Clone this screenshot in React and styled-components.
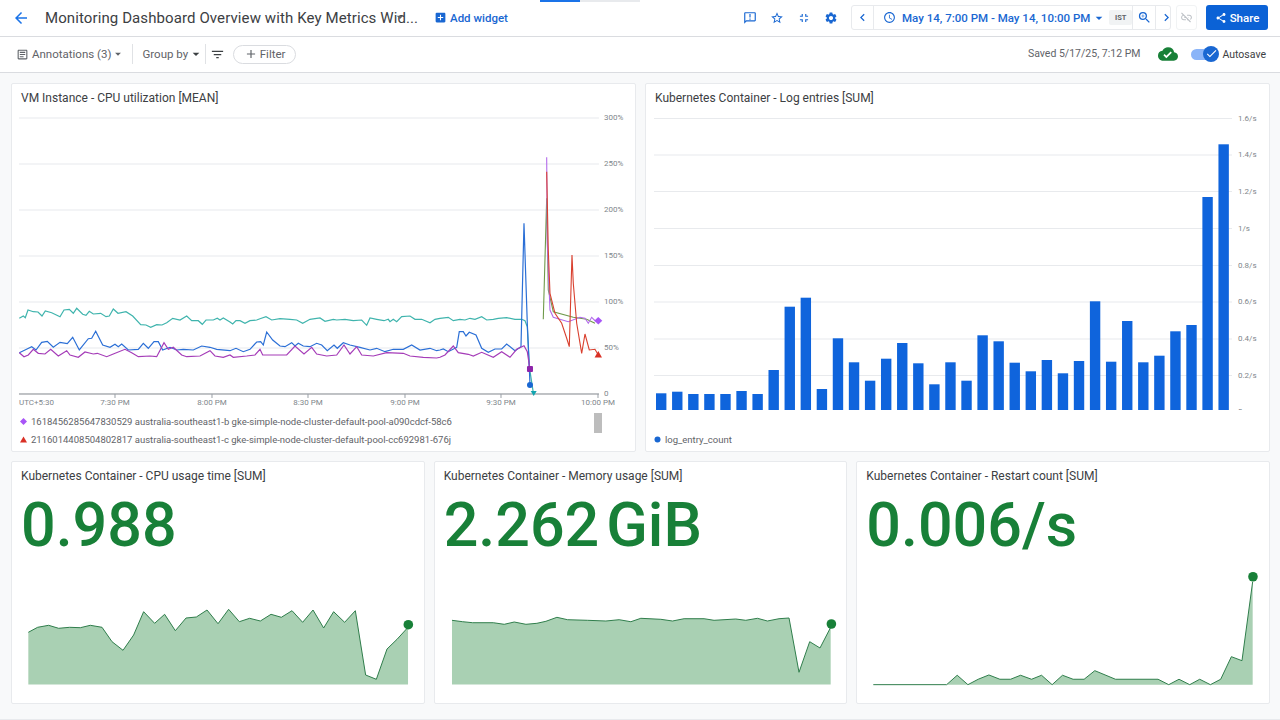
import React from 'react';
import styled, { createGlobalStyle } from 'styled-components';
import {
  MdArrowBack, MdArrowDropDown, MdAddBox, MdOutlineAnnouncement, MdStarBorder, MdFullscreenExit,
  MdSettings, MdChevronLeft, MdChevronRight, MdAccessTime, MdZoomIn, MdOutlineLinkOff, MdShare,
  MdOutlineArticle, MdFilterList, MdAdd, MdCloudDone, MdCheck,
} from 'react-icons/md';

const GlobalStyle = createGlobalStyle`
  html, body { margin: 0; padding: 0; background: #f8f9fa; }
  body { font-family: Roboto, "Liberation Sans", sans-serif; color: #3c4043; }
`;

const Page = styled.div`
  width: 1280px;
  height: 720px;
  display: flex;
  flex-direction: column;
  overflow: hidden;
  position: relative;
  background: #f8f9fa;
  border-bottom: 1px solid #e8eaed;
  box-sizing: border-box;
`;

const LoadBar = styled.div`
  position: absolute;
  top: 0;
  left: 540px;
  width: 100px;
  height: 2px;
  background: linear-gradient(90deg, #1a73e8 40%, #e8eaed 40%);
`;

const Header = styled.header`
  height: 37px;
  flex: none;
  box-sizing: border-box;
  display: flex;
  align-items: center;
  padding: 0 12px 1px 12px;
  background: #fff;
  border-bottom: 1px solid #dadce0;
`;

const BackButton = styled.span`
  display: flex;
  color: #1a73e8;
  font-size: 18px;
  margin-right: 15px;
`;

const DashboardTitle = styled.h1`
  margin: 0;
  font-size: 15px;
  line-height: 20px;
  font-weight: 400;
  letter-spacing: 0.1px;
  color: #3c4043;
  width: 347px;
  white-space: nowrap;
`;

const Caret = styled.span`
  display: flex;
  font-size: ${p => p.$size || 16}px;
  color: ${p => p.$color || '#5f6368'};
  margin: ${p => p.$margin || '0'};
`;

const AddWidget = styled.span`
  display: flex;
  align-items: center;
  gap: 3px;
  margin-left: 26px;
  font-size: 11.5px;
  font-weight: 500;
  color: #1967d2;
`;

const Spacer = styled.div`
  flex: 1;
`;

const HeaderIcons = styled.div`
  display: flex;
  align-items: center;
  gap: 13px;
  color: #1967d2;
  font-size: 14px;
  margin-right: 13px;
`;

const IconSlot = styled.span`
  display: flex;
  font-size: 14px;
`;

const TimeBox = styled.div`
  display: flex;
  align-items: center;
  width: 320px;
  height: 25px;
  box-sizing: border-box;
  border: 1px solid #e8eaed;
  border-radius: 3px;
  color: #1967d2;
`;

const TimeSlot = styled.span`
  width: ${p => p.$width}px;
  height: 100%;
  flex: none;
  display: flex;
  align-items: center;
  justify-content: center;
  font-size: 15px;
  border-right: ${p => (p.$divider ? '1px solid #e8eaed' : 'none')};
`;

const TimeRange = styled.span`
  flex: 1;
  height: 100%;
  display: flex;
  align-items: center;
  padding-left: 9px;
  font-size: 11.5px;
  font-weight: 500;
  white-space: nowrap;
  border-right: 1px solid #e8eaed;
`;

const ZoneChip = styled.span`
  margin-left: 2px;
  width: 23px;
  height: 15px;
  display: flex;
  align-items: center;
  justify-content: center;
  border-radius: 2px;
  background: #f1f3f4;
  color: #5f6368;
  font-size: 7.5px;
  font-weight: 700;
`;

const DisabledButton = styled.span`
  width: 21px;
  height: 25px;
  margin: 0 9px 0 5px;
  box-sizing: border-box;
  display: flex;
  align-items: center;
  justify-content: center;
  border: 1px solid #f1f3f4;
  border-radius: 3px;
  color: #bdc1c6;
  font-size: 13px;
`;

const ShareButton = styled.span`
  width: 62px;
  height: 25px;
  display: flex;
  align-items: center;
  justify-content: center;
  gap: 3px;
  background: #0b62d6;
  border-radius: 3px;
  color: #fff;
  font-size: 11.5px;
  font-weight: 500;
`;

const Toolbar = styled.div`
  height: 36px;
  flex: none;
  box-sizing: border-box;
  display: flex;
  align-items: center;
  padding: 0 14px 1px 16px;
  background: #fff;
  border-bottom: 1px solid #dadce0;
  font-size: 11.5px;
  color: #5f6368;
`;

const ToolbarIcon = styled.span`
  display: flex;
  font-size: 13px;
  margin-right: 3px;
`;

const Divider = styled.span`
  width: 1px;
  height: ${p => p.$height || 20}px;
  background: #e0e2e5;
  margin: ${p => p.$margin};
`;

const FilterPill = styled.span`
  width: 63px;
  height: 19px;
  box-sizing: border-box;
  display: flex;
  align-items: center;
  justify-content: center;
  gap: 2px;
  margin-left: 8px;
  border: 1px solid #dadce0;
  border-radius: 10px;
`;

const SavedText = styled.span`
  font-size: 10.5px;
  color: #5f6368;
  margin-bottom: 2px;
`;

const Cloud = styled.span`
  display: flex;
  font-size: 20px;
  color: #188038;
  margin: 0 13px 0 18px;
`;

const ToggleTrack = styled.span`
  position: relative;
  display: block;
  width: 26px;
  height: 11px;
  border-radius: 6px;
  background: #8ab4f8;
  margin-right: 5px;
`;

const ToggleKnob = styled.span`
  position: absolute;
  right: -2px;
  top: -3px;
  width: 16px;
  height: 16px;
  border-radius: 50%;
  background: #1967d2;
  color: #fff;
  font-size: 13px;
  display: flex;
  align-items: center;
  justify-content: center;
`;

const AutosaveLabel = styled.span`
  color: #3c4043;
  font-size: 10.5px;
`;

const Board = styled.main`
  flex: 1;
  display: grid;
  grid-template-columns: repeat(6, 1fr);
  grid-template-rows: 369px 243px;
  gap: 9px;
  padding: 10px 10px 0 11px;
  box-sizing: border-box;
  align-content: start;
`;

const Card = styled.section`
  grid-column: span ${p => p.$span};
  box-sizing: border-box;
  display: flex;
  flex-direction: column;
  min-width: 0;
  background: #fff;
  border: 1px solid #e8eaed;
  border-radius: 2px;
`;

const CardTitle = styled.h2`
  margin: 0;
  height: 26px;
  flex: none;
  padding: 7px 0 0 9px;
  box-sizing: border-box;
  font-size: 12px;
  line-height: 15px;
  font-weight: 400;
  color: #3c4043;
  white-space: nowrap;
`;

const ChartSvg = styled.svg`
  display: block;
  flex: none;
  width: 100%;
  height: 300px;
`;

const AxisText = styled.text`
  font-family: Roboto, "Liberation Sans", sans-serif;
  font-size: 8px;
  fill: #80868b;
  dominant-baseline: middle;
`;

const Legend = styled.div`
  position: relative;
  flex: 1;
  display: flex;
  flex-direction: column;
  justify-content: flex-end;
  padding: 0 0 3px ${p => p.$left}px;
`;

const LegendRow = styled.div`
  height: 18px;
  display: flex;
  align-items: center;
  gap: 4px;
  font-size: 9.5px;
  color: #5f6368;
  white-space: nowrap;
`;

const LegendMark = styled.svg`
  width: 7px;
  height: 7px;
  flex: none;
`;

const ScrollThumb = styled.span`
  position: absolute;
  left: 582px;
  top: 3px;
  width: 8px;
  height: 20px;
  background: #bdbdbd;
`;

const BigValue = styled.div`
  flex: none;
  height: 74px;
  padding: 3px 0 0 9px;
  box-sizing: border-box;
  font-size: 61px;
  line-height: 68px;
  font-weight: 500;
  color: #188038;
  white-space: nowrap;
`;

const Unit = styled.span`
  margin-left: 7px;
`;

const SparkSvg = styled.svg`
  display: block;
  flex: none;
  width: 100%;
  height: 139px;
  margin-top: auto;
`;

// points traced off the picture at 3x, offset back to page coordinates
const trace = (ox, oy, pts) => pts.map(([x, y]) => [ox + x / 3, oy + y / 3]);
const toLine = pts => pts.map(([x, y]) => `${x.toFixed(1)},${y.toFixed(1)}`).join(' ');

const series = {
  teal: [
    ...trace(10, 290, [[28,85],[40,78],[46,83],[54,60],[70,65],[84,66],[96,78],[106,63],[125,68],[150,80],[162,60],[178,58],[190,70],[200,55],[218,73],[228,76],[238,64],[250,72],[272,70],[288,80],[298,78],[310,57],[324,70],[348,65],[368,78],[392,104],[408,105],[422,112],[440,104],[456,105],[470,98],[488,85],[510,90],[530,78],[545,92],[565,92],[577,103],[588,90],[610,90],[622,85],[630,90],[640,84],[660,96]]),
    ...trace(230, 290, [[8,102],[18,92],[30,92],[45,100],[60,92],[80,90],[90,86],[108,80],[125,90],[150,86],[180,88],[200,90],[218,100],[240,88],[270,84],[285,94],[310,88],[320,90],[345,88],[370,92],[395,90],[410,106],[420,84],[440,88],[462,92],[475,88],[480,95],[490,88],[500,95],[515,80],[540,78],[555,88],[575,88],[600,98],[615,88]]),
    ...trace(440, 110, [[0,625],[25,622],[40,632],[60,628],[75,630],[90,625],[105,628],[125,620],[140,630],[160,628],[175,625],[200,623],[225,628],[245,628],[255,632],[262,650],[268,770],[280,848]]),
  ],
  blue: [
    ...trace(10, 290, [[28,188],[45,180],[65,170],[78,180],[95,157],[112,154],[130,172],[150,157],[172,161],[188,142],[208,180],[235,146],[245,145],[257,124],[278,165],[300,172],[315,163],[325,170],[335,162],[355,180],[385,178],[400,160],[415,175],[432,155],[445,155],[458,180],[480,172],[500,180],[520,178],[550,180],[575,168],[600,172],[620,178],[660,182]]),
    ...trace(230, 290, [[18,175],[40,185],[60,178],[80,156],[92,155],[100,165],[110,126],[128,150],[150,168],[165,170],[185,158],[195,168],[205,160],[220,168],[240,170],[260,160],[275,165],[292,182],[312,165],[322,175],[340,158],[360,165],[390,172],[420,180],[440,175],[465,185],[490,178],[520,178],[545,165],[570,180],[600,175],[620,182]]),
    ...trace(440, 110, [[0,720],[10,717],[25,725],[45,715],[50,712],[58,665],[70,665],[78,678],[88,667],[108,675],[125,715],[145,727],[165,717],[185,717],[200,702],[225,722],[243,710],[252,340],[262,640],[268,770],[270,825]]),
  ],
  purple: [
    ...trace(10, 290, [[28,188],[42,200],[55,195],[70,178],[85,190],[105,192],[122,178],[145,198],[170,182],[180,195],[205,202],[225,186],[250,192],[262,190],[290,200],[310,192],[345,178],[365,188],[385,200],[420,198],[440,200],[462,158],[475,178],[490,172],[515,195],[530,200],[570,198],[600,182],[615,198],[640,202],[660,195]]),
    ...trace(230, 290, [[10,202],[50,198],[75,195],[90,178],[98,195],[170,195],[195,168],[222,192],[245,172],[260,192],[290,198],[320,195],[342,165],[360,192],[380,170],[395,195],[430,198],[470,188],[520,190],[540,198],[580,202],[620,204]]),
    ...trace(440, 110, [[0,742],[15,735],[40,708],[55,728],[85,733],[100,738],[125,727],[160,742],[185,725],[210,742],[230,718],[252,707],[262,725],[270,778]]),
  ],
  green: trace(440, 110, [[310,628],[320,265],[325,540],[340,605],[400,622],[440,628],[465,640]]),
  violet: trace(440, 110, [[320,142],[322,400],[330,600],[340,622],[385,635],[420,622],[435,625],[445,640],[455,622],[465,632],[475,632]]),
  red: trace(440, 110, [[320,185],[325,420],[330,550],[345,610],[365,640],[380,685],[388,710],[396,435],[400,520],[410,640],[425,730],[435,672],[448,720],[465,718],[475,735]]),
};

const cpuTicks = [['300%', 118], ['250%', 164], ['200%', 210], ['150%', 256], ['100%', 302], ['50%', 348], ['0', 394]];
const cpuTimes = [['7:30 PM', 115], ['8:00 PM', 212], ['8:30 PM', 308], ['9:00 PM', 405], ['9:30 PM', 501], ['10:00 PM', 598]];
const logTicks = [['1.6/s', 118.5], ['1.4/s', 155], ['1.2/s', 191.5], ['1/s', 228.5], ['0.8/s', 265.5], ['0.6/s', 302], ['0.4/s', 339], ['0.2/s', 375.5], ['0', 412]];
const logTimes = [['7:30 PM', 749], ['8:00 PM', 846], ['8:30 PM', 942], ['9:00 PM', 1039], ['9:30 PM', 1135.5], ['10:00 PM', 1232]];
const logBars = [393.3, 391.7, 394, 394, 394, 391, 394, 370, 306.7, 297.7, 389, 338.3, 362.3, 380.7, 358.7, 343, 363.3, 384.3, 362.3, 380.7, 335.3, 341.3, 362.7, 371.3, 360, 373.3, 361, 301.3, 361.7, 321, 362.3, 355.7, 331.3, 325, 197, 144.3];

const sparks = [
  {
    title: 'Kubernetes Container - CPU usage time [SUM]',
    value: '0.988',
    left: 11,
    width: 413,
    base: 684.5,
    dot: [408, 624.7],
    points: trace(10, 590, [[54,127],[82,112],[115,106],[145,115],[178,112],[210,113],[240,106],[275,112],[305,155],[338,181],[370,135],[400,65],[433,100],[463,73],[495,122],[527,84],[558,81],[590,60],[623,101],[655,58],[687,95],[718,85],[750,93],[782,73],[813,82],[845,62],[877,97],[908,60],[940,114],[970,65],[1003,97],[1035,62],[1066,255],[1098,268],[1130,177],[1160,148],[1193,112]]),
  },
  {
    title: 'Kubernetes Container - Memory usage [SUM]',
    value: '2.262',
    unit: 'GiB',
    left: 433,
    width: 414,
    base: 684.5,
    dot: [830.7, 624],
    points: trace(430, 590, [[63,91],[95,95],[125,98],[187,98],[220,103],[250,96],[285,103],[318,100],[345,94],[378,82],[410,89],[470,91],[525,93],[565,89],[600,95],[630,85],[690,88],[725,93],[760,86],[820,86],[850,91],[915,87],[945,91],[980,85],[1010,93],[1045,86],[1075,84],[1105,247],[1137,155],[1168,174],[1200,112]]),
  },
  {
    title: 'Kubernetes Container - Restart count [SUM]',
    value: '0.006/s',
    left: 856,
    width: 414,
    base: 684.7,
    dot: [1253.3, 576.7],
    points: trace(850, 560, [[70,374],[290,374],[322,346],[354,374],[385,358],[417,345],[450,358],[482,358],[512,346],[545,358],[575,346],[607,374],[638,346],[670,358],[703,358],[735,332],[797,358],[925,358],[957,374],[988,358],[1020,374],[1050,358],[1082,374],[1113,358],[1145,290],[1177,302],[1209,65]]),
  },
];

const Axis = ({ ticks, times, x0, x1, labelX, baseY, timeY, utcX }) => (
  <g>
    {ticks.map(([label, y]) => (
      <g key={label}>
        {y !== baseY && <line x1={x0} x2={x1} y1={y} y2={y} stroke="#e8eaed" strokeWidth="1.2" />}
        <AxisText x={labelX} y={y}>{label}</AxisText>
      </g>
    ))}
    <line x1={x0} x2={x1} y1={baseY} y2={baseY} stroke="#80868b" strokeWidth="1" />
    <AxisText x={utcX} y={timeY}>UTC+5:30</AxisText>
    {times.map(([label, x]) => (
      <g key={label}>
        <line x1={x} x2={x} y1={baseY} y2={baseY + 4} stroke="#9aa0a6" strokeWidth="1" />
        <AxisText x={x} y={timeY} textAnchor="middle">{label}</AxisText>
      </g>
    ))}
  </g>
);

const CpuChart = () => (
  <ChartSvg viewBox="12 110 623 300">
    <Axis ticks={cpuTicks} times={cpuTimes} x0={19} x1={599} labelX={604} baseY={394} timeY={403} utcX={19} />
    <polyline points={toLine(series.teal)} fill="none" stroke="#3fb4ad" strokeWidth="1.2" />
    <polyline points={toLine(series.blue)} fill="none" stroke="#2b6fd6" strokeWidth="1.2" />
    <polyline points={toLine(series.purple)} fill="none" stroke="#a53cb8" strokeWidth="1.2" />
    <polyline points={toLine(series.green)} fill="none" stroke="#6f9a4a" strokeWidth="1.1" />
    <polyline points={toLine(series.violet)} fill="none" stroke="#b36bea" strokeWidth="1.1" />
    <polyline points={toLine(series.red)} fill="none" stroke="#d9402f" strokeWidth="1.1" />
    <rect x="527" y="366" width="6" height="6" rx="1" fill="#8e24aa" />
    <circle cx="530" cy="385" r="3" fill="#1967d2" />
    <polygon points="530.7,391 536.7,391 533.7,396" fill="#12a4af" />
    <polygon points="598.3,317 602.3,320.7 598.3,324.4 594.3,320.7" fill="#a855f7" />
    <polygon points="598.3,351 602,357.5 594.6,357.5" fill="#d93025" />
  </ChartSvg>
);

const LogChart = () => (
  <ChartSvg viewBox="646 110 623 300">
    <Axis ticks={logTicks} times={logTimes} x0={654} x1={1232} labelX={1238} baseY={412} timeY={421} utcX={653} />
    {logBars.map((top, i) => (
      <rect key={i} x={656 + i * 16.07} y={top} width="10.4" height={412 - top} fill="#0f64dc" />
    ))}
  </ChartSvg>
);

const Sparkline = ({ left, width, base, dot, points }) => {
  const first = points[0];
  const last = points[points.length - 1];
  const area = [[first[0], base], ...points, [last[0], base]];
  return (
    <SparkSvg viewBox={`${left + 1} 564 ${width - 2} 139`}>
      <polygon points={toLine(area)} fill="#a9d0b3" />
      <polyline points={toLine(points)} fill="none" stroke="#2f7d4b" strokeWidth="1" />
      <circle cx={dot[0]} cy={dot[1]} r="4.8" fill="#188038" />
    </SparkSvg>
  );
};

const App = () => (
  <Page>
    <GlobalStyle />
    <LoadBar />
    <Header>
      <BackButton><MdArrowBack /></BackButton>
      <DashboardTitle>Monitoring Dashboard Overview with Key Metrics Wid...</DashboardTitle>
      <Caret $margin="0 0 2px 0"><MdArrowDropDown /></Caret>
      <AddWidget><MdAddBox size={13} />Add widget</AddWidget>
      <Spacer />
      <HeaderIcons>
        <IconSlot><MdOutlineAnnouncement /></IconSlot>
        <IconSlot><MdStarBorder /></IconSlot>
        <IconSlot><MdFullscreenExit /></IconSlot>
        <IconSlot><MdSettings /></IconSlot>
      </HeaderIcons>
      <TimeBox>
        <TimeSlot $width={21} $divider><MdChevronLeft /></TimeSlot>
        <TimeRange>
          <MdAccessTime size={13} style={{ marginRight: 6 }} />
          May 14, 7:00 PM - May 14, 10:00 PM
          <Caret $color="#1967d2" $margin="0 0 0 1px"><MdArrowDropDown /></Caret>
          <ZoneChip>IST</ZoneChip>
        </TimeRange>
        <TimeSlot $width={22} $divider><MdZoomIn /></TimeSlot>
        <TimeSlot $width={20}><MdChevronRight /></TimeSlot>
      </TimeBox>
      <DisabledButton><MdOutlineLinkOff /></DisabledButton>
      <ShareButton><MdShare size={12} />Share</ShareButton>
    </Header>
    <Toolbar>
      <ToolbarIcon><MdOutlineArticle /></ToolbarIcon>
      Annotations (3)
      <Caret $size={14}><MdArrowDropDown /></Caret>
      <Divider $margin="0 9px 0 7px" />
      Group by
      <Caret $size={16} $color="#3c4043"><MdArrowDropDown /></Caret>
      <Divider $margin="0 3px 0 1px" />
      <Caret $size={15} $color="#3c4043" $margin="0 0 0 1px"><MdFilterList /></Caret>
      <FilterPill><MdAdd size={14} />Filter</FilterPill>
      <Spacer />
      <SavedText>Saved 5/17/25, 7:12 PM</SavedText>
      <Cloud><MdCloudDone /></Cloud>
      <ToggleTrack><ToggleKnob><MdCheck /></ToggleKnob></ToggleTrack>
      <AutosaveLabel>Autosave</AutosaveLabel>
    </Toolbar>
    <Board>
      <Card $span={3}>
        <CardTitle>VM Instance - CPU utilization [MEAN]</CardTitle>
        <CpuChart />
        <Legend $left={8}>
          <LegendRow>
            <LegendMark viewBox="0 0 7 7"><polygon points="3.5,0 7,3.5 3.5,7 0,3.5" fill="#a855f7" /></LegendMark>
            1618456285647830529 australia-southeast1-b gke-simple-node-cluster-default-pool-a090cdcf-58c6
          </LegendRow>
          <LegendRow>
            <LegendMark viewBox="0 0 7 7"><polygon points="3.5,0.5 7,6.5 0,6.5" fill="#d93025" /></LegendMark>
            2116014408504802817 australia-southeast1-c gke-simple-node-cluster-default-pool-cc692981-676j
          </LegendRow>
          <ScrollThumb />
        </Legend>
      </Card>
      <Card $span={3}>
        <CardTitle>Kubernetes Container - Log entries [SUM]</CardTitle>
        <LogChart />
        <Legend $left={8}>
          <LegendRow>
            <LegendMark viewBox="0 0 7 7"><circle cx="3.5" cy="3.5" r="3" fill="#1967d2" /></LegendMark>
            log_entry_count
          </LegendRow>
        </Legend>
      </Card>
      {sparks.map(s => (
        <Card $span={2} key={s.title}>
          <CardTitle>{s.title}</CardTitle>
          <BigValue>{s.value}{s.unit && <Unit>{s.unit}</Unit>}</BigValue>
          <Sparkline {...s} />
        </Card>
      ))}
    </Board>
  </Page>
);

export default App;
